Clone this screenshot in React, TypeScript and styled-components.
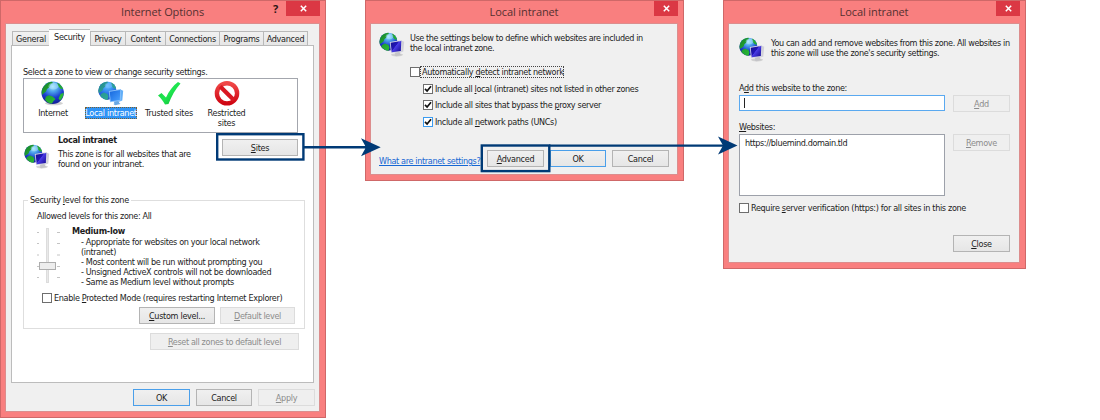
import React from "react";
import styled, { createGlobalStyle } from "styled-components";

const GlobalStyle = createGlobalStyle`
  * { box-sizing: border-box; }
  body {
    margin: 0;
    background: #fff;
    color: #1c1c1c;
    font: 9px/10px "DejaVu Sans Condensed", "DejaVu Sans", sans-serif;
    letter-spacing: -0.35px;
  }
  svg { flex: none; }
  u { text-underline-offset: 1px; text-decoration-thickness: 1px; }
`;

const Stage = styled.main`
  position: relative;
  display: flex;
  align-items: flex-start;
  gap: 39px;
  width: 1100px;
  height: 420px;
  overflow: hidden;
`;

const Frame = styled.section<{ $w: number; $h: number }>`
  display: flex;
  flex-direction: column;
  flex: none;
  width: ${(p) => p.$w}px;
  height: ${(p) => p.$h}px;
  padding: 0 5px 5px 4px;
  background: #f97f7f;
  border: 1px solid #cf6868;
`;

const TitleBar = styled.header`
  display: grid;
  grid-template-columns: 1fr auto 1fr;
  align-items: start;
  height: 22px;
  flex: none;
`;

const Title = styled.h1`
  grid-column: 2;
  margin: 0;
  font: 400 11px/22px "Open Sans", "Noto Sans", sans-serif;
  letter-spacing: -0.1px;
  color: #553030;
`;

const TitleActions = styled.div`
  display: flex;
  justify-content: flex-end;
`;

const Help = styled.span`
  margin-right: 8px;
  font: 700 11px/16px "Open Sans", sans-serif;
  color: #2b1515;
`;

const CloseBox = styled.span<{ $w: number }>`
  display: flex;
  align-items: center;
  justify-content: center;
  width: ${(p) => p.$w}px;
  height: 15px;
  background: #db3844;
`;

const Client = styled.div<{ $pad: string }>`
  flex: 1;
  min-height: 0;
  padding: ${(p) => p.$pad};
  background: #f0f0f0;
  border: 1px solid #dc8d8d;
`;

const Row = styled.div<{ $gap?: number; $mt?: number; $ml?: number }>`
  display: flex;
  align-items: flex-start;
  gap: ${(p) => p.$gap ?? 0}px;
  margin-top: ${(p) => p.$mt ?? 0}px;
  margin-left: ${(p) => p.$ml ?? 0}px;
`;

const Description = styled.div`
  width: 132px;
  margin-left: 8px;
`;

const Text = styled.p<{ $mt?: number; $ml?: number; $ls?: number; $bold?: boolean }>`
  margin: ${(p) => p.$mt ?? 0}px 0 0 ${(p) => p.$ml ?? 0}px;
  white-space: nowrap;
  font-weight: ${(p) => (p.$bold ? 700 : 400)};
  letter-spacing: ${(p) => p.$ls ?? -0.35}px;
`;

const buttonBorders = {
  normal: "#b4b4b4",
  default: "#4a9fea",
  disabled: "#dcdcdc",
};

const Button = styled.button<{ $w: number; $kind?: "default" | "disabled"; $ls?: number }>`
  appearance: none;
  flex: none;
  width: ${(p) => p.$w}px;
  height: 17px;
  padding: 0;
  font: inherit;
  white-space: nowrap;
  letter-spacing: ${(p) => p.$ls ?? -0.3}px;
  color: ${(p) => (p.$kind === "disabled" ? "#8c8c8c" : "#1c1c1c")};
  background: ${(p) => (p.$kind === "disabled" ? "#efefef" : "linear-gradient(#f0f0f0, #e6e6e6)")};
  border: 1px solid ${(p) => buttonBorders[p.$kind ?? "normal"]};
  border-radius: 0;
`;

const Tabs = styled.nav`
  display: flex;
  align-items: flex-end;
  height: 17px;
  margin: 0 0 -1px 1px;
`;

const Tab = styled.span<{ $w: number; $active?: boolean; $ls?: number }>`
  z-index: ${(p) => (p.$active ? 1 : 0)};
  width: ${(p) => p.$w}px;
  height: ${(p) => (p.$active ? 17 : 15)}px;
  padding-top: 2px;
  text-align: center;
  white-space: nowrap;
  letter-spacing: ${(p) => p.$ls ?? -0.3}px;
  background: ${(p) => (p.$active ? "#fff" : "linear-gradient(#f1f1f1, #e6e6e6)")};
  border: 1px solid #b9b9b9;
  border-left-width: ${(p) => (p.$active ? 0 : 1)}px;
  border-right-width: 0;
  border-bottom-color: ${(p) => (p.$active ? "#fff" : "#b9b9b9")};
  &:last-child { border-right-width: 1px; }
`;

const TabPanel = styled.div`
  width: 303px;
  height: 338px;
  padding: 21px 0 0 11px;
  background: #fff;
  border: 1px solid #bcbcbc;
`;

const ZoneList = styled.div`
  display: flex;
  width: 275px;
  height: 55px;
  margin-top: 1px;
  padding: 2px 0 0;
  border: 1px solid #a3a6ad;
`;

const Zone = styled.div<{ $w: number }>`
  display: flex;
  flex-direction: column;
  align-items: center;
  width: ${(p) => p.$w}px;
  text-align: center;
`;

const ZoneLabel = styled.span<{ $selected?: boolean; $ls?: number }>`
  margin-top: ${(p) => (p.$selected ? 1 : 2)}px;
  padding: ${(p) => (p.$selected ? 1 : 0)}px 0 0;
  height: 12px;
  white-space: nowrap;
  letter-spacing: ${(p) => p.$ls ?? -0.3}px;
  color: ${(p) => (p.$selected ? "#fff" : "inherit")};
  background: ${(p) => (p.$selected ? "#2f93f5" : "none")};
  outline: ${(p) => (p.$selected ? "1px dotted #7a5f30" : "none")};
  outline-offset: -1px;
`;

const Group = styled.fieldset`
  width: 282px;
  min-width: 0;
  height: 134px;
  margin: 26px 0 0;
  padding: 0 0 0 13px;
  border: 1px solid #dedede;
`;

const Legend = styled.legend`
  margin-left: -9px;
  padding: 0 2px;
  letter-spacing: -0.33px;
`;

const CheckRow = styled.label<{ $mt?: number; $ml?: number; $ls?: number }>`
  display: flex;
  align-items: center;
  gap: 2px;
  height: 11px;
  margin: ${(p) => p.$mt ?? 0}px 0 0 ${(p) => p.$ml ?? 0}px;
  white-space: nowrap;
  letter-spacing: ${(p) => p.$ls ?? -0.35}px;
`;

const Box = styled.span<{ $hot?: boolean }>`
  display: flex;
  flex: none;
  width: 10px;
  height: 10px;
  background: #fff;
  border: 1px solid ${(p) => (p.$hot ? "#3b9bf0" : "#6e6e6e")};
`;

const Focus = styled.span`
  margin-left: -1px;
  padding-left: 1px;
  outline: 1px dotted #444;
  outline-offset: -0.5px;
`;

const Link = styled.a`
  width: 108px;
  margin-top: 6px;
  color: #1667d3;
  text-decoration: underline;
  text-underline-offset: 1px;
  white-space: nowrap;
`;

const Field = styled.div<{ $h: number; $focus?: boolean }>`
  flex: none;
  width: 206px;
  height: ${(p) => p.$h}px;
  padding: 3px 0 0 5px;
  letter-spacing: -0.4px;
  background: #fff;
  border: 1px solid ${(p) => (p.$focus ? "#5aa9f0" : "#9da1aa")};
`;

const Caret = styled.span`
  display: block;
  width: 1px;
  height: 10px;
  margin: -1px 0 0 -1px;
  background: #222;
`;

const Overlay = styled.svg`
  position: absolute;
  inset: 0;
  pointer-events: none;
`;

const Cross = () => (
  <svg width="7" height="7" viewBox="0 0 7 7">
    <path d="M.8.8l5.4 5.4M6.2.8L.8 6.2" stroke="#fff" strokeWidth="1.5" />
  </svg>
);

const Tick = () => (
  <svg width="8" height="8" viewBox="0 0 8 8">
    <path d="M1 3.8L3.1 6 7 1.2" fill="none" stroke="#111" strokeWidth="1.7" />
  </svg>
);

const Defs = styled.svg`
  position: absolute;
`;

const GlobeDefs = () => (
  <Defs width="0" height="0">
    <defs>
      <radialGradient id="sea" cx=".5" cy=".22" r=".8">
        <stop offset="0" stopColor="#a8e6ff" />
        <stop offset=".3" stopColor="#4aa0ea" />
        <stop offset=".62" stopColor="#1c3fd0" />
        <stop offset="1" stopColor="#121a90" />
      </radialGradient>
      <linearGradient id="land" x1="0" y1="0" x2="1" y2="1">
        <stop offset="0" stopColor="#17852a" />
        <stop offset="1" stopColor="#2fc83a" />
      </linearGradient>
      <linearGradient id="screen" x1="0" y1="0" x2="1" y2=".8">
        <stop offset="0" stopColor="#16108c" />
        <stop offset=".48" stopColor="#2216b8" />
        <stop offset=".52" stopColor="#4a3ce6" />
        <stop offset="1" stopColor="#1c109c" />
      </linearGradient>
      <linearGradient id="screenSel" x1="0" y1="0" x2="1" y2="1">
        <stop offset="0" stopColor="#1667dc" />
        <stop offset="1" stopColor="#48a0ff" />
      </linearGradient>
      <linearGradient id="green" x1="0" y1="0" x2="1" y2="1">
        <stop offset="0" stopColor="#18c83c" />
        <stop offset=".5" stopColor="#1ee650" />
        <stop offset="1" stopColor="#0fb030" />
      </linearGradient>
      <linearGradient id="red" x1="0" y1="0" x2="0" y2="1">
        <stop offset="0" stopColor="#f04848" />
        <stop offset="1" stopColor="#cf0512" />
      </linearGradient>
    </defs>
  </Defs>
);

const GlobeIcon = () => (
  <svg width="26" height="25" viewBox="0 0 26 25">
    <ellipse cx="14" cy="22.300" rx="9" ry="2" fill="#999" opacity=".45" />
    <circle cx="12.700" cy="11.800" r="11.200" fill="url(#sea)" />
    <path d="M5 4C7.500 1.700 9.500 .9 12 .8L13 2 10.500 3.500 9.500 6 7 8 6 10.500 3.500 12.500 2 14C1 10.500 2 6.500 5 4zM17 1.800C20 3 22 5 23.200 8L21 8 18.500 5.500zM6 15.500L9 14.300 12.500 15.500 15.500 18 13.500 20 12 22.500C9 22.500 6.500 21 5 18.500zM20.500 13L23.700 11.800C23.500 15 22.300 17.500 20 19.500L18.500 17.500z" fill="url(#land)" />
    <ellipse cx="13.500" cy="5.200" rx="5" ry="3.400" fill="#b8ecff" opacity=".45" />
  </svg>
);

const IntranetIcon = ({ selected }: { selected?: boolean }) => (
  <svg width="26" height="25" viewBox="0 0 26 25">
    {!selected && <ellipse cx="18" cy="22.800" rx="6" ry="1.600" fill="#aaa" opacity=".45" />}
    <circle cx="9.400" cy="9.700" r="9" fill="url(#sea)" />
    <path d="M3 3.500C5 1.500 7.200 .8 9.200 .7L10 2 8 3.500 7.500 5.500 5.500 7 4.500 9.500 2.500 11 .8 12C0 9 1 5.500 3 3.500zM13 1.500C15.500 2.700 17.500 5 18.200 7.500L16 7.500 13.800 5zM3 13L6 11.500 9.500 13 10.500 15.500 9.500 18.700C6.500 18.700 4 17 2.300 14.700z" fill="url(#land)" />
    <ellipse cx="10.500" cy="4.500" rx="3.800" ry="2.800" fill="#b8ecff" opacity=".45" />
    {selected && <circle cx="9.400" cy="9.700" r="9.100" fill="#3497ff" opacity=".48" />}
    <path d="M15.500 20.500l5-1 .8 2.500 1.200 1-5.500 1.200-1.500-1.200 1-.8z" fill={selected ? "#6aa8e4" : "#c4c4c8"} />
    <path d="M22 8.300l3.200 1.500-.9 9.700-3.300 1.200z" fill={selected ? "#63aff8" : "#d2d2d8"} />
    <path d="M10.800 10L23 8.100 22.500 19.800 12 21.200z" fill={selected ? "#8ec4fa" : "#d6d8e4"} />
    <path d="M11.700 10.800L22.300 9.100 21.800 19 12.700 20.300z" fill={selected ? "url(#screenSel)" : "url(#screen)"} />
  </svg>
);

const TrustedIcon = () => (
  <svg width="26" height="25" viewBox="0 0 26 25">
    <path d="M2 14.500L5.500 12 10 16.500C13 10 17 4.500 22 1L24.500 2.500C19.500 8 15.500 15 12.500 23L9 23.500C7 20 5 17 2 14.500z" fill="url(#green)" />
  </svg>
);

const RestrictedIcon = () => (
  <svg width="26" height="25" viewBox="0 0 26 25">
    <circle cx="13" cy="12.300" r="10.100" fill="#fff" stroke="url(#red)" strokeWidth="4.400" />
    <path d="M6.200 5.500L19.800 19.100" stroke="#d91822" strokeWidth="4.200" />
  </svg>
);

const Slider = () => (
  <svg width="28" height="58" viewBox="0 0 28 58">
    <path d="M-1 6.500h3M-1 17.500h3M-1 29h3M-1 40.500h3M-1 51.500h3M20 6.500h3M20 17.500h3M20 29h3M20 40.500h3M20 51.500h3" stroke="#c4c4c4" />
    <rect x="9.500" y="2.500" width="2" height="54" fill="#e9e9e9" stroke="#dcdcdc" />
    <rect x="2.500" y="36.500" width="16" height="7" fill="#ededed" stroke="#adadad" />
  </svg>
);

const TitleRow = ({ title, help, closeWidth = 24 }: { title: string; help?: boolean; closeWidth?: number }) => (
  <TitleBar>
    <Title>{title}</Title>
    <TitleActions>
      {help && <Help>?</Help>}
      <CloseBox $w={closeWidth}><Cross /></CloseBox>
    </TitleActions>
  </TitleBar>
);

const InternetOptions = () => (
  <Frame $w={326} $h={418}>
    <TitleRow title="Internet Options" help closeWidth={34} />
    <Client $pad="5px 0 0 5px">
      <Tabs>
        <Tab $w={37}>General</Tab>
        <Tab $w={41} $active>Security</Tab>
        <Tab $w={35}>Privacy</Tab>
        <Tab $w={40}>Content</Tab>
        <Tab $w={54}>Connections</Tab>
        <Tab $w={44}>Programs</Tab>
        <Tab $w={45}>Advanced</Tab>
      </Tabs>
      <TabPanel>
        <Text>Select a zone to view or change security settings.</Text>
        <ZoneList>
          <Zone $w={58}><GlobeIcon /><ZoneLabel>Internet</ZoneLabel></Zone>
          <Zone $w={58}><IntranetIcon selected /><ZoneLabel $selected>Local intranet</ZoneLabel></Zone>
          <Zone $w={58}><TrustedIcon /><ZoneLabel $ls={-0.25}>Trusted sites</ZoneLabel></Zone>
          <Zone $w={57}><RestrictedIcon /><ZoneLabel>Restricted<br />sites</ZoneLabel></Zone>
        </ZoneList>
        <Row $mt={2} $ml={1}>
          <Row $mt={9}><IntranetIcon /></Row>
          <Description>
            <Text $bold>Local intranet</Text>
            <Text $mt={4}>This zone is for all websites that are<br />found on your intranet.</Text>
          </Description>
          <Row $mt={4} $ml={32}><Button $w={76}><u>S</u>ites</Button></Row>
        </Row>
        <Group>
          <Legend>Security <u>l</u>evel for this zone</Legend>
          <Text $mt={6}>Allowed levels for this zone: All</Text>
          <Row $mt={5}>
            <Slider />
            <div>
              <Text $bold $ml={7} $ls={-0.25}>Medium-low</Text>
              <Text $ml={16} $mt={1}>
                - Appropriate for websites on your local network<br />
                (intranet)<br />
                - Most content will be run without prompting you<br />
                - Unsigned ActiveX controls will not be downloaded<br />
                - Same as Medium level without prompts
              </Text>
            </div>
          </Row>
          <CheckRow $mt={5} $ml={5} $ls={-0.33}><Box /><span>Enable <u>P</u>rotected Mode (requires restarting Internet Explorer)</span></CheckRow>
          <Row $mt={4} $ml={102} $gap={5}>
            <Button $w={76}><u>C</u>ustom level...</Button>
            <Button $w={75} $kind="disabled" $ls={-0.35}><u>D</u>efault level</Button>
          </Row>
        </Group>
        <Row $mt={4} $ml={127}><Button $w={149} $kind="disabled" $ls={-0.35}><u>R</u>eset all zones to default level</Button></Row>
      </TabPanel>
      <Row $mt={6} $ml={122} $gap={6}>
        <Button $w={57} $kind="default">OK</Button>
        <Button $w={56}>Cancel</Button>
        <Button $w={57} $kind="disabled"><u>A</u>pply</Button>
      </Row>
    </Client>
  </Frame>
);

const IntranetSettings = () => (
  <Frame $w={319} $h={181}>
    <TitleRow title="Local intranet" />
    <Client $pad="8px 0 0 8px">
      <Row>
        <IntranetIcon />
        <Text $ml={5} $mt={1} $ls={-0.4}>Use the settings below to define which websites are included in<br />the local intranet zone.</Text>
      </Row>
      <CheckRow $ml={31} $mt={9}><Box /><Focus>Automatically <u>d</u>etect intranet network</Focus></CheckRow>
      <CheckRow $ml={44} $mt={6} $ls={-0.38}><Box><Tick /></Box><span>Include all <u>l</u>ocal (intranet) sites not listed in other zones</span></CheckRow>
      <CheckRow $ml={44} $mt={5}><Box><Tick /></Box><span>Include all sites that bypass the <u>p</u>roxy server</span></CheckRow>
      <CheckRow $ml={44} $mt={6}><Box $hot><Tick /></Box><span>Include all <u>n</u>etwork paths (UNCs)</span></CheckRow>
      <Row $mt={23}>
        <Link>What are intranet settings?</Link>
        <Row $gap={6}>
          <Button $w={57}><u>A</u>dvanced</Button>
          <Button $w={56} $kind="default">OK</Button>
          <Button $w={57}>Cancel</Button>
        </Row>
      </Row>
    </Client>
  </Frame>
);

const IntranetSites = () => (
  <Frame $w={303} $h={269}>
    <TitleRow title="Local intranet" />
    <Client $pad="13px 0 0 10px">
      <Row>
        <IntranetIcon />
        <Text $ml={6} $mt={1} $ls={-0.37}>You can add and remove websites from this zone. All websites in<br />this zone will use the zone's security settings.</Text>
      </Row>
      <Text $mt={21}>A<u>d</u>d this website to the zone:</Text>
      <Row $mt={2} $gap={8}>
        <Field $h={16} $focus><Caret /></Field>
        <Button $w={57} $kind="disabled"><u>A</u>dd</Button>
      </Row>
      <Text $mt={10}><u>W</u>ebsites:</Text>
      <Row $mt={2} $gap={8}>
        <Field $h={62}>https://bluemind.domain.tld</Field>
        <Button $w={57} $kind="disabled"><u>R</u>emove</Button>
      </Row>
      <CheckRow $mt={6} $ls={-0.33}><Box /><span>Require <u>s</u>erver verification (https:) for all sites in this zone</span></CheckRow>
      <Row $mt={22} $ml={214}><Button $w={57}><u>C</u>lose</Button></Row>
    </Client>
  </Frame>
);

export default function App() {
  return (
    <Stage>
      <GlobalStyle />
      <GlobeDefs />
      <InternetOptions />
      <IntranetSettings />
      <IntranetSites />
      <Overlay width="1100" height="420" viewBox="0 0 1100 420">
        <g fill="none" stroke="#003a76" strokeWidth="2.400">
          <rect x="217.200" y="134.200" width="86.200" height="25.300" />
          <path d="M304 147.300H368" />
          <rect x="481.800" y="145.500" width="67.500" height="25.600" />
          <path d="M549 145.600H725" />
        </g>
        <path d="M380.700 147.300L361 138.300l5 9-5 9zM737.500 145.600L718 136.600l5 9-5 9z" fill="#003a76" />
      </Overlay>
    </Stage>
  );
}
